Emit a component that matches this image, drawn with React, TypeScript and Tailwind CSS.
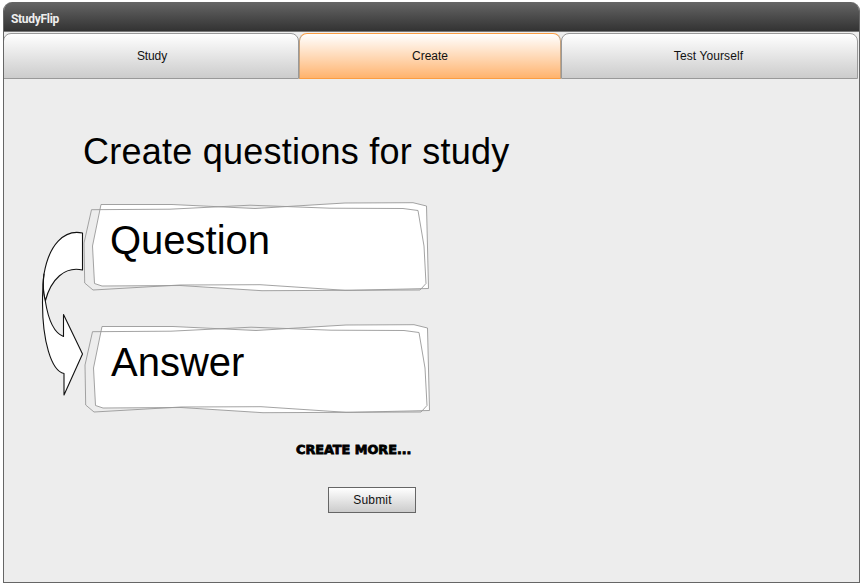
const labelFont = "font-['Liberation_Sans',Arial,sans-serif]";

function Tab({ label, className }: { label: string; className: string }) {
  return (
    <button className={`h-[46px] rounded-t-[8px] border pb-px text-[12px] leading-none text-[#111] ${className}`}>
      <span>{label}</span>
    </button>
  );
}

function SketchCard({ text, className }: { text: string; className: string }) {
  return (
    <div className={`grid h-[90px] w-[348px] ${className}`}>
      <svg className="col-start-1 row-start-1" width="348" height="90" viewBox="83 202 348 90" fill="none" stroke="#999" strokeWidth="0.9">
        <path fill="#fff" d="M101 204.5L172 204.5L255 208.5L325 204.2L345 203L413 202.7L426.5 206L428.5 288.5L350 290.3L262 290.7L180 285.5L102 286L94.5 283.5L92.5 246Z" />
        <path d="M91.5 209.7L170 209.2L250 205.2L330 208.2L403 208.5L418 210.5L424 246L426 283.5L420 290L345 290.3L260 284.7L180 285L93 290L84.7 283L84 243Z" />
      </svg>
      <span className="col-start-1 row-start-1 pl-[27px] pt-[15px] text-[40px] leading-[46px]">{text}</span>
    </div>
  );
}

function CurvedArrow() {
  return (
    <svg className="mt-[28px] h-[168px] w-[43px]" viewBox="41 230 43 168" fill="#fff" stroke="#111" strokeWidth="1.1" strokeLinejoin="round">
      <path d="M82.5 233V270C65 266 51 279 45.3 301C42.8 292 42.5 283 44 274C49 245 64 229 82.5 233Z" />
      <path d="M45.3 301C48 318 54 333 63.5 336.5V314.5L82.5 354L64 395V373.5C51 371 42.5 340 42.5 303C42.5 291 43 282 44 274C42.7 284 43 292 45.3 301Z" />
    </svg>
  );
}

export default function App() {
  return (
    <div className={`h-[584px] w-[862px] bg-white pl-[3px] pt-[2px] text-black ${labelFont}`}>
      <div className="flex h-[581px] w-[857px] flex-col overflow-hidden rounded-t-[9px] border border-t-0 border-[#666] bg-[#ededed]">
        <header className="h-[30px] shrink-0 border-b border-[#777] bg-linear-to-b from-[#666] to-[#333] pl-[7px] pt-[10px]">
          <h1 className="font-['Roboto',sans-serif] text-[12px] font-bold leading-[14px] tracking-[-0.3px] text-[#eee]">StudyFlip</h1>
        </header>
        <nav className="-ml-px mt-px flex shrink-0">
          <Tab label="Study" className="w-[296px] border-[#999] bg-linear-to-b from-white to-[#ccc] pl-[8px] pr-[6px] tracking-[-0.1px]" />
          <Tab label="Create" className="w-[262px] border-[#fb9d42] border-x-[#c5a17c] bg-linear-to-b from-white to-[#ffb36c]" />
          <Tab label="Test Yourself" className="w-[297px] border-[#999] bg-linear-to-b from-white to-[#ccc] pr-[2px] tracking-[0.1px]" />
        </nav>
        <main className="flex flex-col items-start">
          <h2 className="ml-[79px] mt-[52px] whitespace-nowrap text-[36px] leading-[42px] tracking-[0.24px]">Create questions for study</h2>
          <section className="ml-[37px] mt-[29px] flex">
            <CurvedArrow />
            <div className="-ml-px flex flex-col">
              <SketchCard text="Question" className="" />
              <SketchCard text="Answer" className="ml-px mt-[32px]" />
            </div>
          </section>
          <button className="ml-[292px] mt-[29px] h-[14px] origin-left scale-x-[1.065] whitespace-nowrap font-['DejaVu_Sans',sans-serif] text-[12px] font-bold leading-[14px] [-webkit-text-stroke:0.8px_black]">CREATE MORE...</button>
          <button className="ml-[324px] mt-[30px] h-[26px] w-[88px] border border-[#666] bg-linear-to-b from-white to-[#ccc] pb-px pl-px text-[12px] leading-none tracking-[0.2px] text-[#111]">Submit</button>
        </main>
      </div>
    </div>
  );
}
